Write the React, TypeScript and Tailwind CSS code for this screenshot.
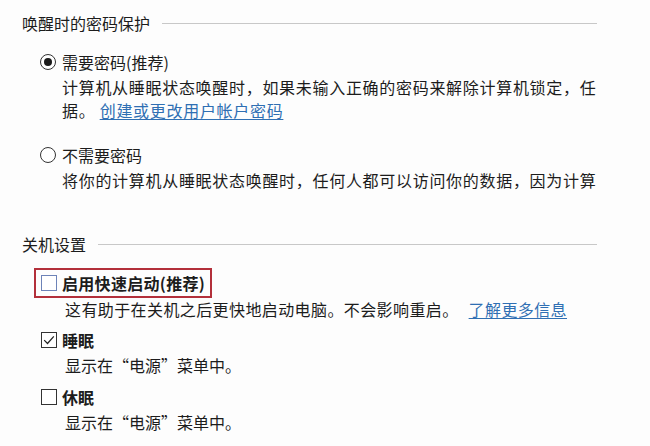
import React from 'react';

const font = { fontFamily: '"Noto Sans CJK SC", "Noto Sans", sans-serif' };

function SectionHeader({ title, className = '' }: { title: string; className?: string }) {
  return (
    <div className={`flex items-center gap-3 h-[20px] ${className}`}>
      <span className="text-[16px] leading-[20px] whitespace-nowrap">{title}</span>
      <div className="flex-1 h-px bg-[#c8c8c8]" />
    </div>
  );
}

function Radio({ checked }: { checked?: boolean }) {
  return (
    <span className="w-4 h-4 rounded-full border border-[#333] flex items-center justify-center shrink-0 bg-white">
      {checked && <span className="w-2 h-2 rounded-full bg-[#1a1a1a]" />}
    </span>
  );
}

function Checkbox({ checked, focused }: { checked?: boolean; focused?: boolean }) {
  return (
    <span
      className={`w-4 h-4 border flex items-center justify-center shrink-0 bg-white ${
        focused ? 'border-[#6d83b8]' : 'border-[#333]'
      }`}
    >
      {checked && (
        <svg viewBox="0 0 16 16" className="w-[14px] h-[14px]">
          <path d="M2.5 8.2 L6.3 12 L13.5 3.8" fill="none" stroke="#222" strokeWidth="1.4" />
        </svg>
      )}
    </span>
  );
}

export default function App() {
  return (
    <div className="w-[650px] h-[446px] bg-[#fdfdfd] overflow-hidden text-[#1c1c1c]" style={font}>
      <div className="w-[597px] overflow-hidden pl-[22px] pt-[13px]">
        {/* 唤醒时的密码保护 */}
        <SectionHeader title="唤醒时的密码保护" />

        <div className="ml-[18px] mt-[18px] flex items-center gap-[6px] h-[22px]">
          <Radio checked />
          <span className="text-[16px] leading-[22px]">需要密码(推荐)</span>
        </div>
        <div className="ml-[40px] mt-[3px] text-[16px] leading-[23px] tracking-[0.7px]">
          <div className="whitespace-nowrap">
            计算机从睡眠状态唤醒时，如果未输入正确的密码来解除计算机锁定，任
          </div>
          <div className="whitespace-nowrap">
            据。 <a className="text-[#2f6fb3] underline underline-offset-2">创建或更改用户帐户密码</a>
          </div>
        </div>

        <div className="ml-[18px] mt-[22px] flex items-center gap-[6px] h-[22px]">
          <Radio />
          <span className="text-[16px] leading-[22px]">不需要密码</span>
        </div>
        <div className="ml-[40px] mt-[3px] text-[16px] leading-[23px] tracking-[0.7px] whitespace-nowrap">
          将你的计算机从睡眠状态唤醒时，任何人都可以访问你的数据，因为计算
        </div>

        {/* 关机设置 */}
        <SectionHeader title="关机设置" className="mt-[42px]" />

        <div className="ml-[12px] mt-[14px] inline-flex items-center gap-[5px] h-[30px] border-2 border-[#b3303b] px-[5px]">
          <Checkbox focused />
          <span className="text-[16px] leading-[22px] font-bold tracking-[0.3px]">启用快速启动(推荐)</span>
        </div>
        <div className="ml-[43px] text-[16px] leading-[23px] tracking-[0.4px] whitespace-nowrap">
          这有助于在关机之后更快地启动电脑。不会影响重启。
          <a className="ml-[10px] text-[#2f6fb3] underline underline-offset-2">了解更多信息</a>
        </div>

        <div className="ml-[19px] mt-[8px] flex items-center gap-[5px] h-[22px]">
          <Checkbox checked />
          <span className="text-[16px] leading-[22px] font-bold">睡眠</span>
        </div>
        <div className="ml-[43px] mt-[3px] text-[16px] leading-[23px] whitespace-nowrap">
          显示在“电源”菜单中。
        </div>

        <div className="ml-[19px] mt-[9px] flex items-center gap-[5px] h-[22px]">
          <Checkbox />
          <span className="text-[16px] leading-[22px] font-bold">休眠</span>
        </div>
        <div className="ml-[43px] mt-[3px] text-[16px] leading-[23px] whitespace-nowrap">
          显示在“电源”菜单中。
        </div>
      </div>
    </div>
  );
}
